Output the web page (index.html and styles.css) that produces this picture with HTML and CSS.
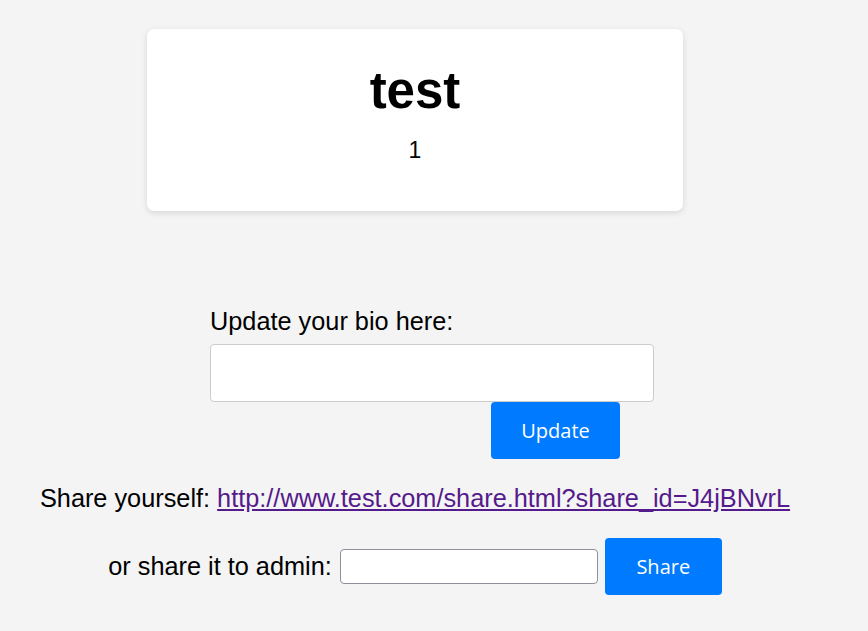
FILE: index.html
```html
<!DOCTYPE html>
<html>
<head>
<meta charset="utf-8">
<link rel="stylesheet" href="styles.css">
</head>
<body>
<div class="page">
  <div class="card">
    <h1 class="title">test</h1>
    <p class="count">1</p>
  </div>
  <form class="bio">
    <label class="bio-label">Update your bio here:</label>
    <input class="bio-input" type="text">
    <div class="bio-actions"><button type="button" class="btn btn-update">Update</button></div>
  </form>
  <p class="share-line">Share yourself: <a class="share-link" href="#">http://www.test.com/share.html?share_id=J4jBNvrL</a></p>
  <div class="admin-row">
    <span class="admin-label">or share it to admin:</span>
    <input class="admin-input" type="text">
    <button type="button" class="btn btn-share">Share</button>
  </div>
</div>
</body>
</html>
```
FILE: styles.css
```css
html, body {
  margin: 0;
  padding: 0;
  background: #f4f4f4;
}
body {
  font-family: "Liberation Sans", Arial, sans-serif;
  color: #000;
}
.page {
  width: 830px;
  display: flex;
  flex-direction: column;
  align-items: center;
  padding-top: 29px;
}
.card {
  width: 536px;
  height: 182px;
  box-sizing: border-box;
  background: #fff;
  border-radius: 7px;
  box-shadow: 0 2px 6px rgba(0,0,0,0.12);
  text-align: center;
  padding-top: 33px;
}
.title {
  margin: 0;
  font-size: 51px;
  font-weight: bold;
  line-height: 58px;
}
.count {
  margin: 17px 0 0;
  font-size: 23px;
  line-height: 26px;
}
.bio {
  align-self: flex-start;
  margin: 96px 0 0 210px;
  width: 444px;
  display: flex;
  flex-direction: column;
}
.bio-label {
  font-size: 25.3px;
  line-height: 29px;
  margin-bottom: 8px;
}
.bio-input {
  box-sizing: border-box;
  width: 444px;
  height: 58px;
  border: 1px solid #ccc;
  border-radius: 4px;
  background: #fff;
  margin: 0;
}
.bio-actions {
  padding-left: 281px;
}
.btn {
  border: none;
  border-radius: 4px;
  background: #007bff;
  color: #fff;
  font-family: "Open Sans", "Noto Sans", sans-serif;
  font-size: 20px;
  height: 57px;
  margin: 0;
  padding: 0;
}
.btn-update {
  width: 129px;
}
.share-line {
  margin: 25px 0 0;
  font-size: 25.3px;
  line-height: 29px;
}
.share-link {
  color: #551a8b;
}
.admin-row {
  margin-top: 25px;
  display: flex;
  align-items: center;
  gap: 7px;
  font-size: 25.3px;
  line-height: 29px;
}
.admin-label {
  margin-right: 1px;
}
.admin-input {
  box-sizing: border-box;
  width: 258px;
  height: 35px;
  border: 1px solid #8f8f9d;
  border-radius: 4px;
  background: #fff;
  margin: 0;
}
.btn-share {
  width: 117px;
}
```
